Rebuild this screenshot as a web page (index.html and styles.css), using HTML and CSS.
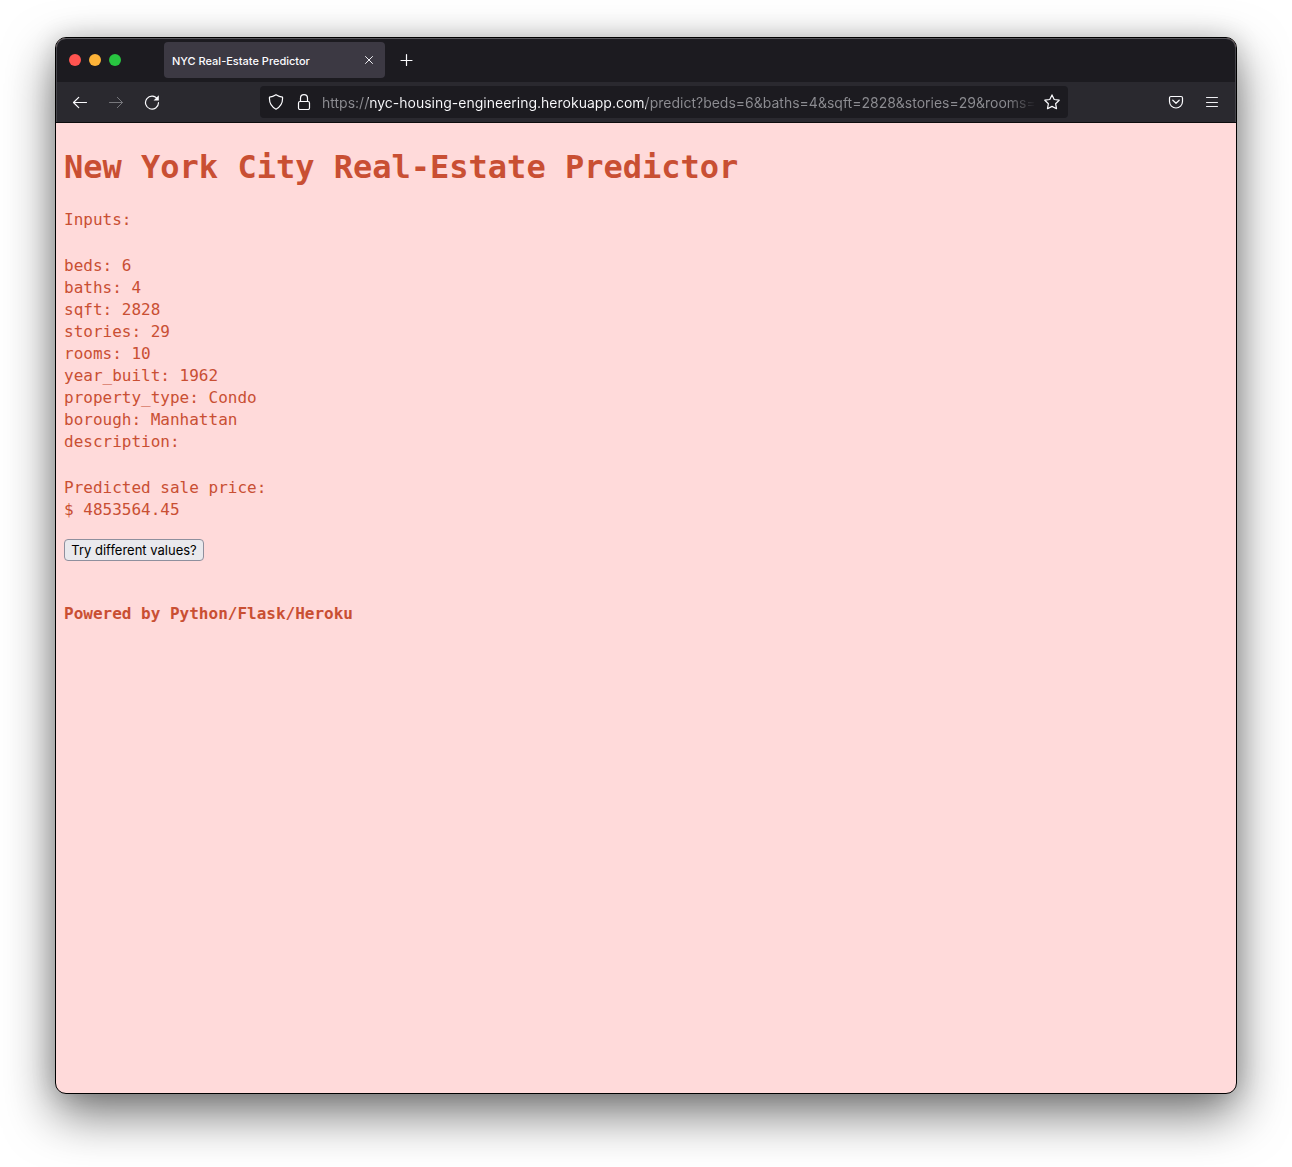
FILE: index.html
```html
<!DOCTYPE html>
<html lang="en">
<head>
<meta charset="utf-8">
<meta name="viewport" content="width=device-width, initial-scale=1">
<title>NYC Real-Estate Predictor</title>
<link rel="stylesheet" href="styles.css">
</head>
<body>
<div class="window">
  <header class="chrome">
    <div class="tab-bar">
      <div class="lights">
        <button class="light light-close" aria-label="Close window"></button>
        <button class="light light-minimize" aria-label="Minimize window"></button>
        <button class="light light-zoom" aria-label="Zoom window"></button>
      </div>
      <div class="tab">
        <span class="tab-title">NYC Real-Estate Predictor</span>
        <button class="icon-button" aria-label="Close tab">
          <svg class="icon" viewBox="0 0 16 16"><path d="M4.500 4.500l7 7M11.500 4.500l-7 7"/></svg>
        </button>
      </div>
      <button class="icon-button" aria-label="New tab">
        <svg class="icon icon-bright" viewBox="0 0 16 16"><path d="M7.500 2.500v11M2 8.500h11"/></svg>
      </button>
    </div>
    <nav class="toolbar" aria-label="Browser">
      <div class="button-group">
        <button class="icon-button" aria-label="Back">
          <svg class="icon icon-bright" viewBox="0 0 16 16"><path d="M14.500 8.500H1.500M6.700 3.300L1.500 8.500l5.200 5.200"/></svg>
        </button>
        <button class="icon-button" aria-label="Forward" disabled>
          <svg class="icon" viewBox="0 0 16 16"><path d="M1.500 8.500h13M9.300 3.300l5.200 5.200-5.200 5.200"/></svg>
        </button>
        <button class="icon-button" aria-label="Reload">
          <svg class="icon icon-bright" viewBox="0 0 16 16"><path d="M13.500 5.200A6.500 6.500 0 1 0 14.500 8.700"/><path class="solid" d="M14.800 1.300v5.200H9.600z"/></svg>
        </button>
      </div>
      <div class="url-bar">
        <button class="icon-button" aria-label="Tracking protection">
          <svg class="icon icon-bright" viewBox="0 0 16 16"><path d="M8 .700C10 2 12.300 2.900 14.500 3.100c.4 4.800-1.500 9.500-6.500 12.100C3 12.600 1.100 7.900 1.500 3.100 3.700 2.900 6 2 8 .700z"/></svg>
        </button>
        <button class="icon-button" aria-label="Site security">
          <svg class="icon icon-bright" viewBox="0 0 16 16"><rect x="2.500" y="7.500" width="11" height="8" rx="1.500"/><path d="M4.500 7.500V4.200a3.500 3.500 0 0 1 7 0v3.300"/></svg>
        </button>
        <input class="url" type="text" aria-label="Address" value="https://nyc-housing-engineering.herokuapp.com/predict?beds=6&amp;baths=4&amp;sqft=2828&amp;stories=29&amp;rooms=10&amp;year_built=1962">
        <button class="icon-button" aria-label="Bookmark this page">
          <svg class="icon icon-bright" viewBox="0 0 16 16"><path d="M8 .900l2.200 4.600 5 .700-3.600 3.500.9 5L8 12.400l-4.500 2.300.9-5L.800 6.200l5-.700z"/></svg>
        </button>
      </div>
      <div class="button-group">
        <button class="icon-button" aria-label="Save to Pocket">
          <svg class="icon icon-bright" viewBox="0 0 16 16"><path d="M3 2.500h10a1.500 1.500 0 0 1 1.500 1.500v3.500a6.500 6.500 0 0 1-13 0V4A1.500 1.500 0 0 1 3 2.500zM4.800 6.200L8 9.300l3.200-3.100"/></svg>
        </button>
        <button class="icon-button" aria-label="Menu">
          <svg class="icon" viewBox="0 0 16 16"><path d="M2.500 3.500h11M2.500 8.500h11M2.500 12.500h11"/></svg>
        </button>
      </div>
    </nav>
  </header>
  <main class="page">
    <h1 class="title">New York City Real-Estate Predictor</h1>
    <p class="block">Inputs:</p>
    <ul class="block inputs">
      <li>beds: 6</li>
      <li>baths: 4</li>
      <li>sqft: 2828</li>
      <li>stories: 29</li>
      <li>rooms: 10</li>
      <li>year_built: 1962</li>
      <li>property_type: Condo</li>
      <li>borough: Manhattan</li>
      <li>description:</li>
    </ul>
    <p class="block price">Predicted sale price:<br>$ 4853564.45</p>
    <button class="retry">Try different values?</button>
    <h4 class="credit">Powered by Python/Flask/Heroku</h4>
  </main>
</div>
</body>
</html>
```
FILE: styles.css
```css
* {
  box-sizing: border-box;
}

body {
  display: flex;
  min-height: 100vh;
  margin: 0;
  padding: 37px 55px 73px;
  background: #fff;
  font-family: Inter, sans-serif;
}

.window {
  display: flex;
  flex: 1;
  flex-direction: column;
  min-width: 0;
  overflow: hidden;
  border: 1px solid #000;
  border-radius: 11px;
  background: #ffdada;
  box-shadow: 0 20px 50px rgba(0, 0, 0, 0.55), 0 0 24px rgba(0, 0, 0, 0.15);
}

/* Browser chrome */
.chrome {
  border-bottom: 1px solid #0c0c0d;
  border-radius: 10px 10px 0 0;
  background: #1c1b20;
  box-shadow: inset 0 1px #58575c, inset 1px 0 #46454b, inset -1px 0 #46454b;
}

.tab-bar {
  display: flex;
  align-items: center;
  height: 44px;
  padding: 0 13px;
  gap: 14px;
}

.lights {
  display: flex;
  gap: 8px;
  margin-right: 29px;
}

.light {
  width: 12px;
  height: 12px;
  padding: 0;
  border: 0;
  border-radius: 50%;
}

.light-close {
  background: #ff5450;
}

.light-minimize {
  background: #fdb338;
}

.light-zoom {
  background: #28c540;
}

.tab {
  display: flex;
  align-items: center;
  justify-content: space-between;
  width: 221px;
  height: 36px;
  padding: 0 8px;
  border-radius: 4px;
  background: #3c3943;
}

.tab-title {
  padding-top: 2px;
  color: #fbfbfe;
  font-size: 11px;
  font-weight: 500;
}

.icon-button {
  display: flex;
  flex: none;
  padding: 0;
  border: 0;
  background: none;
  color: #eeeef2;
}

.icon-button:disabled {
  color: #77777c;
}

.icon {
  width: 16px;
  height: 16px;
  fill: none;
  stroke: currentColor;
  stroke-linecap: round;
  stroke-linejoin: round;
}

.icon-bright {
  color: #fbfbfe;
  stroke-width: 1.2;
}

.solid {
  fill: currentColor;
  stroke: none;
}

.toolbar {
  display: flex;
  align-items: center;
  justify-content: space-between;
  height: 40px;
  margin: 0 1px;
  padding: 0 15px;
  gap: 20px;
  background: #2a292f;
}

.button-group {
  display: flex;
  flex: none;
  gap: 20px;
}

.url-bar {
  display: flex;
  flex: 0 1 808px;
  align-items: center;
  min-width: 0;
  height: 32px;
  padding: 0 8px;
  gap: 12px;
  border-radius: 4px;
  background: #1c1b20;
}

/* Dims everything but the domain and fades out the overflowing end */
.url {
  flex: 1;
  min-width: 0;
  margin: 0 -4px 0 -2px;
  padding: 2px 0 0;
  border: 0;
  outline: 0;
  background: linear-gradient(90deg, #8d8d92 46px, #fbfbfe 46px 324px, #8d8d92 324px calc(100% - 30px), transparent);
  background-clip: text;
  color: transparent;
  font: 14px/20px Inter, sans-serif;
}

/* Page content */
.page {
  padding: 24px 8px;
  color: #c94f33;
  font: 16px/22px "DejaVu Sans Mono", monospace;
}

.title {
  margin: 0 0 22px;
  font-size: 32px;
  line-height: 40px;
}

.block {
  margin: 0 0 24px;
  padding: 0;
}

.inputs {
  list-style: none;
}

.price {
  margin-bottom: 18px;
}

.retry {
  display: block;
  min-width: 140px;
  height: 22px;
  margin: 0 0 42px;
  padding: 0 5px;
  border: 1px solid #8f8f9d;
  border-radius: 4px;
  background: #e9e9ed;
  color: #000;
  font: 13px/20px Inter, sans-serif;
}

.credit {
  margin: 0;
  font-size: 16px;
}
```
